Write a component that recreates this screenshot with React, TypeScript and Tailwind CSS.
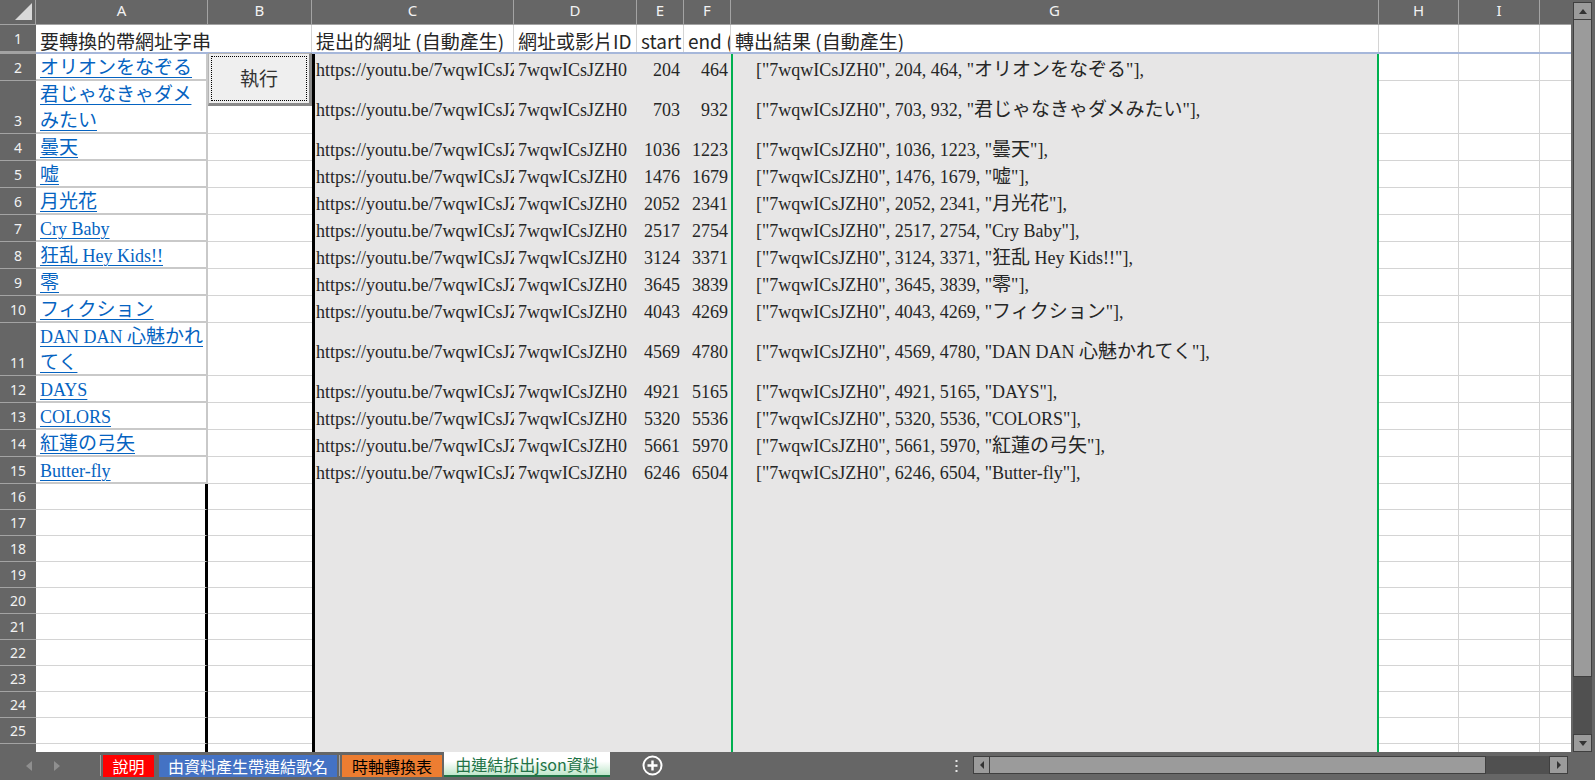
import React from "react";

const CJK = /([\u3000-\u303f\u3040-\u30ff\u3400-\u9fff\uff00-\uffef]+)/;

function Mix({ t }: { t: string }) {
  const parts = t.split(CJK);
  return (
    <span className="whitespace-pre">
      {parts.map((p, i) =>
        i % 2 === 1 ? (
          <span key={i} className="text-[19px]">
            {p}
          </span>
        ) : (
          <React.Fragment key={i}>{p}</React.Fragment>
        )
      )}
    </span>
  );
}

function MixWrap({ t }: { t: string }) {
  const parts = t.split(CJK);
  return (
    <>
      {parts.map((p, i) =>
        i % 2 === 1 ? (
          <span key={i} className="text-[19px]">
            {p}
          </span>
        ) : (
          <React.Fragment key={i}>{p}</React.Fragment>
        )
      )}
    </>
  );
}

type Item = { a: string; s: number; e: number; tall?: boolean };

const items: Item[] = [
  { a: "オリオンをなぞる", s: 204, e: 464 },
  { a: "君じゃなきゃダメみたい", s: 703, e: 932, tall: true },
  { a: "曇天", s: 1036, e: 1223 },
  { a: "嘘", s: 1476, e: 1679 },
  { a: "月光花", s: 2052, e: 2341 },
  { a: "Cry Baby", s: 2517, e: 2754 },
  { a: "狂乱 Hey Kids!!", s: 3124, e: 3371 },
  { a: "零", s: 3645, e: 3839 },
  { a: "フィクション", s: 4043, e: 4269 },
  { a: "DAN DAN 心魅かれてく", s: 4569, e: 4780, tall: true },
  { a: "DAYS", s: 4921, e: 5165 },
  { a: "COLORS", s: 5320, e: 5536 },
  { a: "紅蓮の弓矢", s: 5661, e: 5970 },
  { a: "Butter-fly", s: 6246, e: 6504 },
];

const ID = "7wqwICsJZH0";

function RowHead({ n }: { n?: number }) {
  return (
    <div className="w-[36px] shrink-0 bg-[#666666] border-b border-[#a3a3a3] flex items-end justify-center pb-[4px] text-[14px] leading-[16px] text-[#f2f2f2] font-['Noto_Sans',sans-serif] overflow-hidden">
      {n}
    </div>
  );
}

function DataRow({ n, item }: { n: number; item: Item }) {
  const h = item.tall ? "h-[53px]" : "h-[27px]";
  return (
    <div className={`flex shrink-0 ${h} font-['Liberation_Serif','Noto_Sans_CJK_JP',serif] text-[18px] text-[#262626]`}>
      <RowHead n={n} />
      {item.tall ? (
        <div className="w-[172px] shrink-0 bg-white border-r-2 border-b-2 border-[#c9c9c9] pl-[4px] pr-[1px] overflow-hidden leading-[25px] pt-[1px]">
          <span className="text-[#0563c1] underline decoration-1 underline-offset-[3px]">
            <MixWrap t={item.a} />
          </span>
        </div>
      ) : (
        <div className="w-[172px] shrink-0 bg-white border-r-2 border-b-2 border-[#c9c9c9] pl-[4px] flex items-center pt-[3px] overflow-hidden whitespace-nowrap leading-[22px]">
          <span className="text-[#0563c1] underline decoration-1 underline-offset-[3px]">
            <Mix t={item.a} />
          </span>
        </div>
      )}
      <div className="w-[104px] shrink-0 bg-white border-b border-[#d4d4d4]" />
      <div className="w-[202px] shrink-0 bg-[#e7e6e6] border-l-[3px] border-black pl-[1px] flex items-center pt-[4px] overflow-hidden whitespace-nowrap leading-[20px]">
        <span>https://youtu.be/{ID}</span>
      </div>
      <div className="w-[123px] shrink-0 bg-[#e7e6e6] pl-[4px] flex items-center pt-[4px] overflow-hidden whitespace-nowrap leading-[20px]">
        <span>{ID}</span>
      </div>
      <div className="w-[47px] shrink-0 bg-[#e7e6e6] pr-[4px] flex items-center justify-end pt-[4px] leading-[20px]">
        <span>{item.s}</span>
      </div>
      <div className="w-[47px] shrink-0 bg-[#e7e6e6] pr-[3px] flex items-center justify-end pt-[4px] leading-[20px]">
        <span>{item.e}</span>
      </div>
      <div className="w-[648px] shrink-0 bg-[#e7e6e6] border-l-2 border-r-2 border-[#00b050] pl-[23px] flex items-center pt-[4px] whitespace-nowrap overflow-hidden leading-[20px]">
        <Mix t={`["${ID}", ${item.s}, ${item.e}, "${item.a}"],`} />
      </div>
      <div className="w-[80px] shrink-0 bg-white border-r border-b border-[#d4d4d4]" />
      <div className="w-[81px] shrink-0 bg-white border-r border-b border-[#d4d4d4]" />
      <div className="w-[31px] shrink-0 bg-white border-b border-[#d4d4d4]" />
    </div>
  );
}

function BlankRow({ n, partial }: { n?: number; partial?: boolean }) {
  if (partial) {
    return (
      <div className="flex shrink-0 h-[8px]">
        <div className="w-[36px] shrink-0 bg-[#666666]" />
        <div className="w-[172px] shrink-0 bg-white border-r-[3px] border-black" />
        <div className="w-[104px] shrink-0 bg-white" />
        <div className="w-[202px] shrink-0 bg-[#e7e6e6] border-l-[3px] border-black" />
        <div className="w-[123px] shrink-0 bg-[#e7e6e6]" />
        <div className="w-[47px] shrink-0 bg-[#e7e6e6]" />
        <div className="w-[47px] shrink-0 bg-[#e7e6e6]" />
        <div className="w-[648px] shrink-0 bg-[#e7e6e6] border-l-2 border-r-2 border-[#00b050]" />
        <div className="w-[80px] shrink-0 bg-white border-r border-[#d4d4d4]" />
        <div className="w-[81px] shrink-0 bg-white border-r border-[#d4d4d4]" />
        <div className="w-[31px] shrink-0 bg-white" />
      </div>
    );
  }
  return (
    <div className="flex shrink-0 h-[26px]">
      <RowHead n={n} />
      <div className="w-[172px] shrink-0 bg-white border-r-[3px] border-r-black border-b border-b-[#d4d4d4]" />
      <div className="w-[104px] shrink-0 bg-white border-b border-[#d4d4d4]" />
      <div className="w-[202px] shrink-0 bg-[#e7e6e6] border-l-[3px] border-black" />
      <div className="w-[123px] shrink-0 bg-[#e7e6e6]" />
      <div className="w-[47px] shrink-0 bg-[#e7e6e6]" />
      <div className="w-[47px] shrink-0 bg-[#e7e6e6]" />
      <div className="w-[648px] shrink-0 bg-[#e7e6e6] border-l-2 border-r-2 border-[#00b050]" />
      <div className="w-[80px] shrink-0 bg-white border-r border-b border-[#d4d4d4]" />
      <div className="w-[81px] shrink-0 bg-white border-r border-b border-[#d4d4d4]" />
      <div className="w-[31px] shrink-0 bg-white border-b border-[#d4d4d4]" />
    </div>
  );
}

function ColHead() {
  const cell =
    "shrink-0 bg-[#666666] border-r border-b border-[#a3a3a3] flex items-center justify-center pb-[3px] text-[15px] text-[#f2f2f2]";
  return (
    <div className="flex shrink-0 h-[25px] font-['Noto_Sans',sans-serif]">
      <div className="w-[36px] shrink-0 bg-[#666666] border-r border-b border-[#a3a3a3] flex items-end justify-end pr-[2px] pb-[3px]">
        <svg width="19" height="18" viewBox="0 0 19 18">
          <path d="M1 17 L18 17 L18 0 Z" fill="#d9d9d9" />
        </svg>
      </div>
      <div className={`w-[172px] ${cell}`}>A</div>
      <div className={`w-[104px] ${cell}`}>B</div>
      <div className={`w-[202px] ${cell}`}>C</div>
      <div className={`w-[123px] ${cell}`}>D</div>
      <div className={`w-[47px] ${cell}`}>E</div>
      <div className={`w-[47px] ${cell}`}>F</div>
      <div className={`w-[648px] ${cell}`}>G</div>
      <div className={`w-[80px] ${cell}`}>H</div>
      <div className={`w-[81px] ${cell}`}>I</div>
      <div className="w-[31px] shrink-0 bg-[#666666] border-b border-[#a3a3a3]" />
    </div>
  );
}

function HeaderRow() {
  const t =
    "shrink-0 bg-white border-r border-[#d4d4d4] pl-[4px] flex items-center pt-[5px] whitespace-nowrap overflow-hidden leading-[22px]";
  return (
    <div className="flex shrink-0 h-[27px] text-[19px] text-[#262626] font-['Noto_Sans_CJK_TC',sans-serif]">
      <RowHead n={1} />
      <div className="w-[172px] shrink-0 bg-white pl-[4px] flex items-center pt-[5px] whitespace-nowrap leading-[22px] z-10">
        <span>要轉換的帶網址字串</span>
      </div>
      <div className="w-[104px] shrink-0 bg-white border-r border-[#d4d4d4]" />
      <div className={`w-[202px] ${t}`}>
        <span>提出的網址 (自動產生)</span>
      </div>
      <div className={`w-[123px] ${t}`}>
        <span>網址或影片ID</span>
      </div>
      <div className={`w-[47px] ${t}`}>
        <span>start</span>
      </div>
      <div className={`w-[47px] ${t} pl-[3px]`}>
        <span>end (秒)</span>
      </div>
      <div className={`w-[648px] ${t}`}>
        <span>轉出結果 (自動產生)</span>
      </div>
      <div className={`w-[80px] ${t}`} />
      <div className={`w-[81px] ${t}`} />
      <div className="w-[31px] shrink-0 bg-white" />
    </div>
  );
}

function PaneLine() {
  return (
    <div className="flex shrink-0 h-[2px]">
      <div className="w-[36px] shrink-0 bg-[#a3a3a3]" />
      <div className="flex-1 bg-[#a6b7da]" />
    </div>
  );
}

function VScroll() {
  return (
    <div className="w-[24px] shrink-0 h-[752px] flex flex-col pl-[2px] pr-[3px] bg-[#666666]">
      <div className="mt-[2px] h-[18px] shrink-0 bg-[#9b9b9b] border border-[#3f3f3f] flex items-center justify-center">
        <svg width="8" height="5" viewBox="0 0 8 5">
          <path d="M0 5 L4 0 L8 5 Z" fill="#333" />
        </svg>
      </div>
      <div className="h-[657px] shrink-0 bg-[#9b9b9b] border border-t-0 border-[#3f3f3f]" />
      <div className="flex-1 bg-[#505050]" />
      <div className="h-[18px] shrink-0 bg-[#9b9b9b] border border-[#3f3f3f] flex items-center justify-center">
        <svg width="8" height="5" viewBox="0 0 8 5">
          <path d="M0 0 L4 5 L8 0 Z" fill="#333" />
        </svg>
      </div>
    </div>
  );
}

function TabBar() {
  return (
    <div className="h-[28px] shrink-0 flex items-start bg-[#666666] font-['Noto_Sans_CJK_TC',sans-serif] text-[16px]">
      <div className="w-[100px] h-[28px] shrink-0 flex items-center">
        <svg className="ml-[26px]" width="6" height="10" viewBox="0 0 6 10">
          <path d="M6 0 L0 5 L6 10 Z" fill="#8f8f8f" />
        </svg>
        <svg className="ml-[22px]" width="6" height="10" viewBox="0 0 6 10">
          <path d="M0 0 L6 5 L0 10 Z" fill="#8f8f8f" />
        </svg>
      </div>
      <div className="mt-[3px] w-px h-[21px] shrink-0 bg-[#a6a6a6]" />
      <div className="ml-[2px] mt-[3px] w-[51px] h-[22px] shrink-0 bg-[#ff0000] text-white leading-[22px] text-center">
        說明
      </div>
      <div className="ml-[5px] mt-[3px] w-[178px] h-[22px] shrink-0 bg-[#4472c4] text-white leading-[22px] text-center">
        由資料產生帶連結歌名
      </div>
      <div className="ml-[2px] mt-[3px] w-px h-[21px] shrink-0 bg-[#a6a6a6]" />
      <div className="ml-[2px] mt-[3px] w-[100px] h-[22px] shrink-0 bg-[#ed7d31] text-black leading-[22px] text-center">
        時軸轉換表
      </div>
      <div className="ml-[2px] w-[166px] h-[25px] shrink-0 bg-gradient-to-b from-white from-40% to-[#bfe6cb] border-b-2 border-[#217346] text-[#217346] leading-[22px] text-center pt-[1px]">
        由連結拆出json資料
      </div>
      <div className="ml-[32px] mt-[3px] shrink-0">
        <svg width="21" height="21" viewBox="0 0 21 21">
          <circle cx="10.5" cy="10.5" r="9" fill="none" stroke="#ffffff" strokeWidth="2" />
          <path d="M10.5 5.5 V15.5 M5.5 10.5 H15.5" stroke="#ffffff" strokeWidth="2.4" />
        </svg>
      </div>
      <div className="ml-[292px] mt-[8px] shrink-0">
        <svg width="3" height="13" viewBox="0 0 3 13">
          <rect x="0.5" y="0" width="2" height="2" fill="#e6e6e6" />
          <rect x="0.5" y="5" width="2" height="2" fill="#e6e6e6" />
          <rect x="0.5" y="10" width="2" height="2" fill="#e6e6e6" />
        </svg>
      </div>
      <div className="ml-[15px] mt-[4px] h-[18px] flex shrink-0">
        <div className="w-[17px] h-[18px] bg-[#9b9b9b] border border-[#3f3f3f] flex items-center justify-center">
          <svg width="4" height="8" viewBox="0 0 4 8">
            <path d="M4 0 L0 4 L4 8 Z" fill="#333" />
          </svg>
        </div>
        <div className="w-[496px] h-[18px] bg-[#9b9b9b] border border-l-0 border-[#3f3f3f]" />
        <div className="w-[63px] h-[18px] bg-[#505050]" />
        <div className="w-[19px] h-[18px] bg-[#9b9b9b] border border-[#3f3f3f] flex items-center justify-center">
          <svg width="4" height="8" viewBox="0 0 4 8">
            <path d="M0 0 L4 4 L0 8 Z" fill="#333" />
          </svg>
        </div>
      </div>
    </div>
  );
}

export default function App() {
  return (
    <div className="w-[1595px] h-[780px] bg-[#666666] overflow-hidden flex flex-col">
      <div className="flex h-[752px] shrink-0">
        <div className="relative w-[1571px] shrink-0 flex flex-col overflow-hidden">
          <ColHead />
          <HeaderRow />
          <PaneLine />
          {items.map((it, i) => (
            <DataRow key={i} n={i + 2} item={it} />
          ))}
          {[16, 17, 18, 19, 20, 21, 22, 23, 24, 25].map((n) => (
            <BlankRow key={n} n={n} />
          ))}
          <BlankRow partial />
          <div className="absolute left-[208px] top-[53px] w-[104px] h-[53px] bg-[#efefef] border-t border-l border-[#b4b4b4] border-r-[3px] border-b-[3px] border-r-[#8a8a8a] border-b-[#8a8a8a] flex items-center justify-center font-['Noto_Sans_CJK_TC',sans-serif] text-[19px] text-[#333333]">
            <div className="absolute inset-[2px] border border-dotted border-black" />
            <span>執行</span>
          </div>
        </div>
        <VScroll />
      </div>
      <TabBar />
    </div>
  );
}
